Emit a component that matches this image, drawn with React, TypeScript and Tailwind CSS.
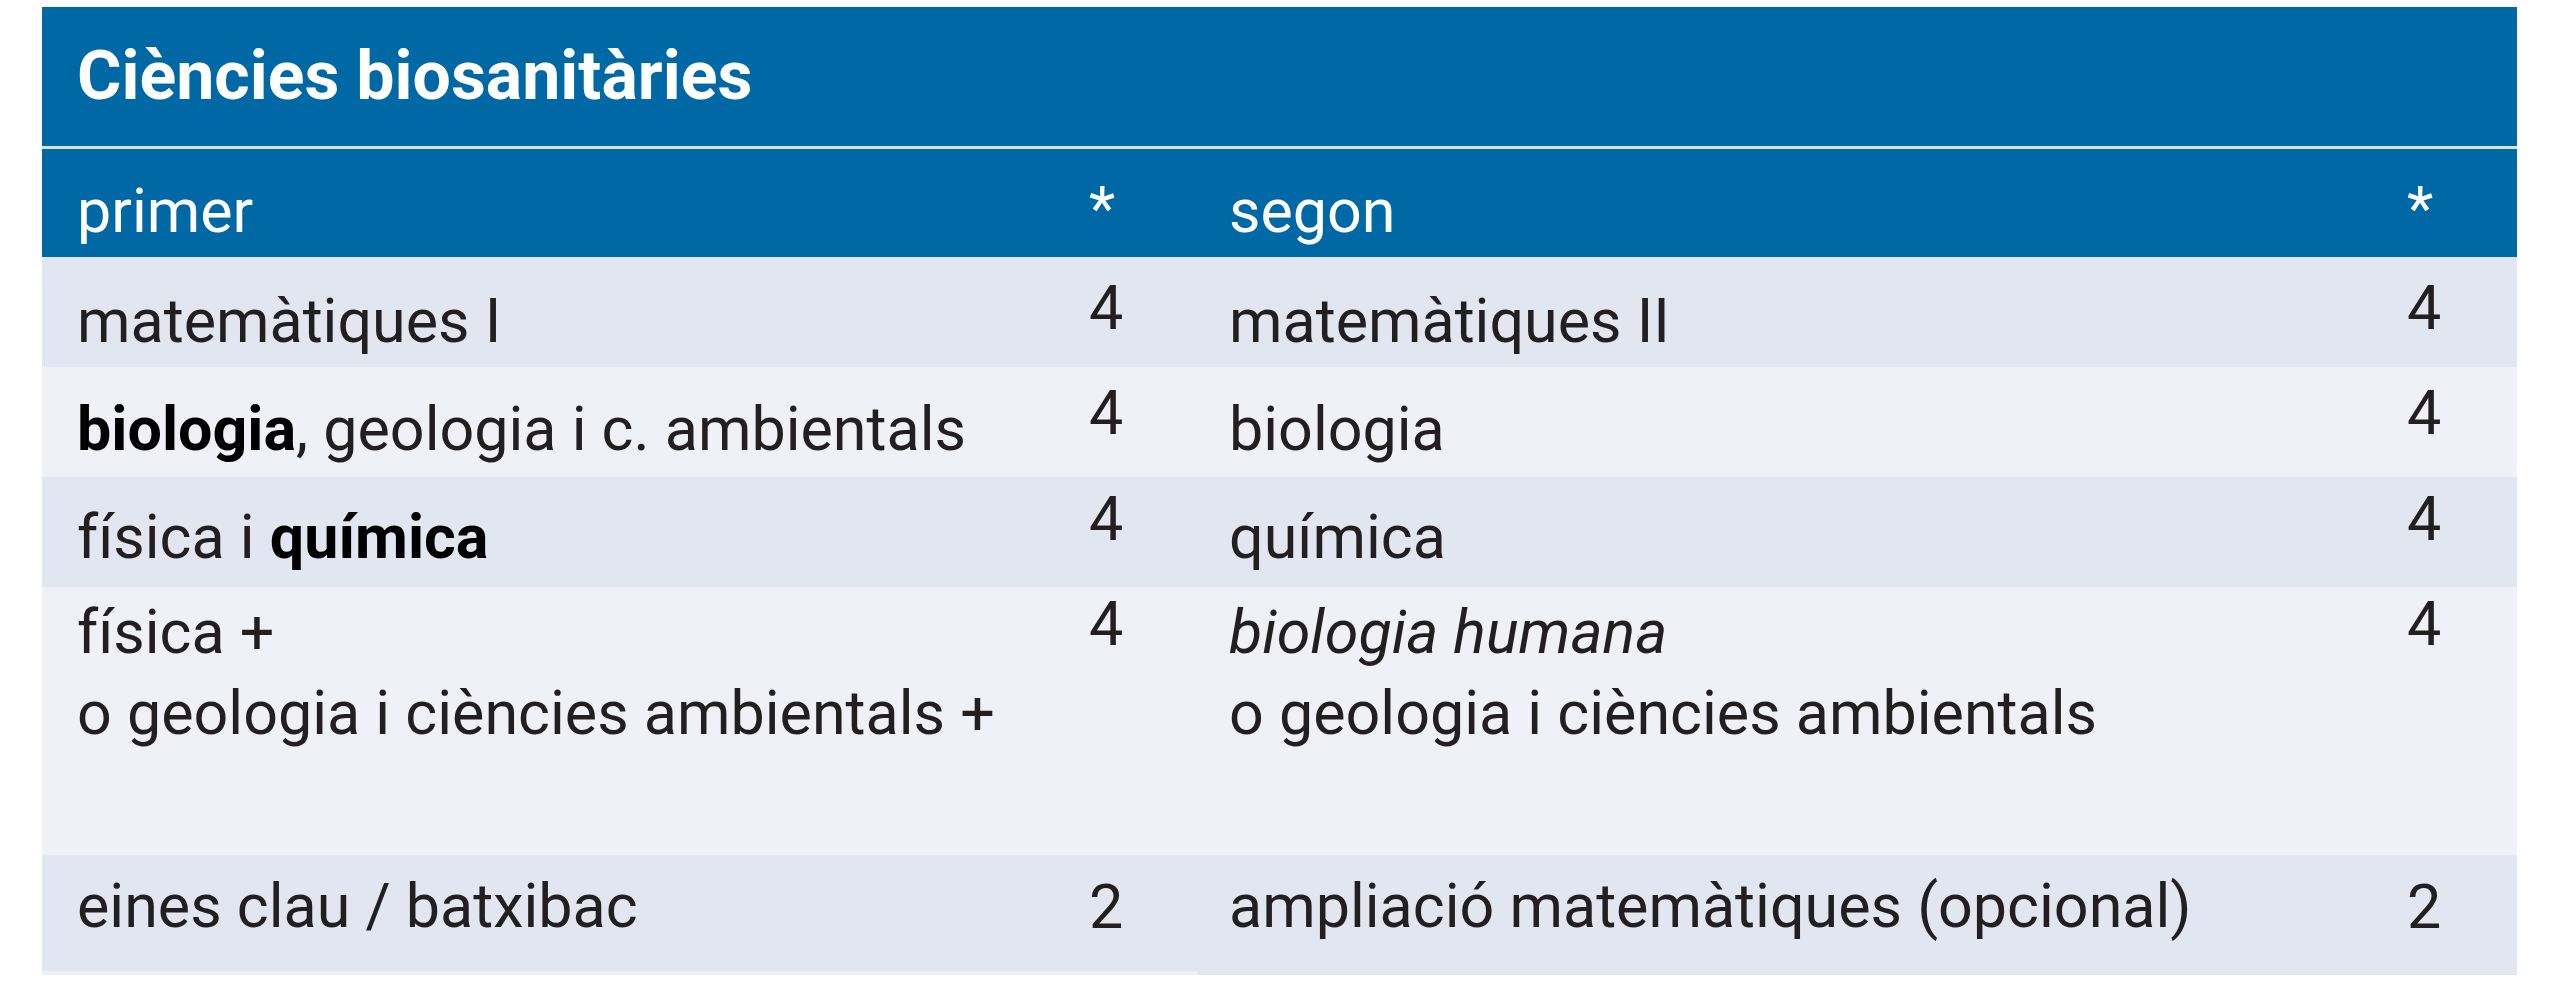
const rows = [
  {
    bg: "bg-[#e1e6f0]",
    h: "h-[110px]",
    pt: "pt-[24px]",
    npt: "pt-[21px]",
    left: <>matemàtiques I</>,
    leftNum: "4",
    right: <>matemàtiques II</>,
    rightNum: "4",
  },
  {
    bg: "bg-[#eff1f6]",
    h: "h-[110px]",
    pt: "pt-[22px]",
    npt: "pt-[16px]",
    left: (
      <>
        <b className="font-bold text-black">biologia</b>, geologia i c. ambientals
      </>
    ),
    leftNum: "4",
    right: <>biologia</>,
    rightNum: "4",
  },
  {
    bg: "bg-[#e1e6f0]",
    h: "h-[110px]",
    pt: "pt-[20px]",
    npt: "pt-[12px]",
    left: (
      <>
        física i <b className="font-bold text-black">química</b>
      </>
    ),
    leftNum: "4",
    right: <>química</>,
    rightNum: "4",
  },
  {
    bg: "bg-[#eff1f6]",
    h: "h-[268px]",
    pt: "pt-[5px]",
    npt: "pt-[7px]",
    left: (
      <>
        física +
        <br />o geologia i ciències ambientals +
      </>
    ),
    leftNum: "4",
    right: (
      <>
        <i>biologia humana</i>
        <br />o geologia i ciències ambientals
      </>
    ),
    rightNum: "4",
  },
];

const App = () => {
  return (
    <div className="min-h-screen bg-white pt-[7px] pl-[42px] font-['Roboto','Liberation_Sans',sans-serif]">
      <div className="w-[2475px]">
        <div className="h-[139px] bg-[#0069a5] pl-[35px] pt-[29px]">
          <h1 className="text-[68px] leading-[80px] font-bold text-white">Ciències biosanitàries</h1>
        </div>
        <div className="h-[3px] bg-[#d6e4ef]" />

        <div className="grid grid-cols-[1047px_109px_1209px_110px] text-[61px] leading-[81px] text-[#231f20]">
          <div className="h-[108px] bg-[#0069a5] pl-[35px] pt-[22px] text-white">primer</div>
          <div className="h-[108px] bg-[#0069a5] pt-[20px] text-white">*</div>
          <div className="h-[108px] bg-[#0069a5] pl-[31px] pt-[22px] text-white">segon</div>
          <div className="h-[108px] bg-[#0069a5] pt-[20px] text-white">*</div>

          {rows.map((r, i) => (
            <div key={i} className="contents">
              <div className={`${r.bg} ${r.h} ${r.pt} pl-[35px]`}>{r.left}</div>
              <div className={`${r.bg} ${r.h} ${r.npt} leading-[60px]`}>{r.leftNum}</div>
              <div className={`${r.bg} ${r.h} ${r.pt} pl-[31px]`}>{r.right}</div>
              <div className={`${r.bg} ${r.h} ${r.npt} leading-[60px]`}>{r.rightNum}</div>
            </div>
          ))}

          <div className="h-[120px] bg-[#e1e6f0] border-b-[4px] border-[#eef0f5] pl-[35px] pt-[11px]">
            eines clau / batxibac
          </div>
          <div className="h-[120px] bg-[#e1e6f0] border-b-[4px] border-[#eef0f5] pt-[22px] leading-[60px]">2</div>
          <div className="h-[120px] bg-[#e1e6f0] pl-[31px] pt-[11px]">ampliació matemàtiques (opcional)</div>
          <div className="h-[120px] bg-[#e1e6f0] pt-[22px] leading-[60px]">2</div>
        </div>
      </div>
    </div>
  );
};

export default App;
